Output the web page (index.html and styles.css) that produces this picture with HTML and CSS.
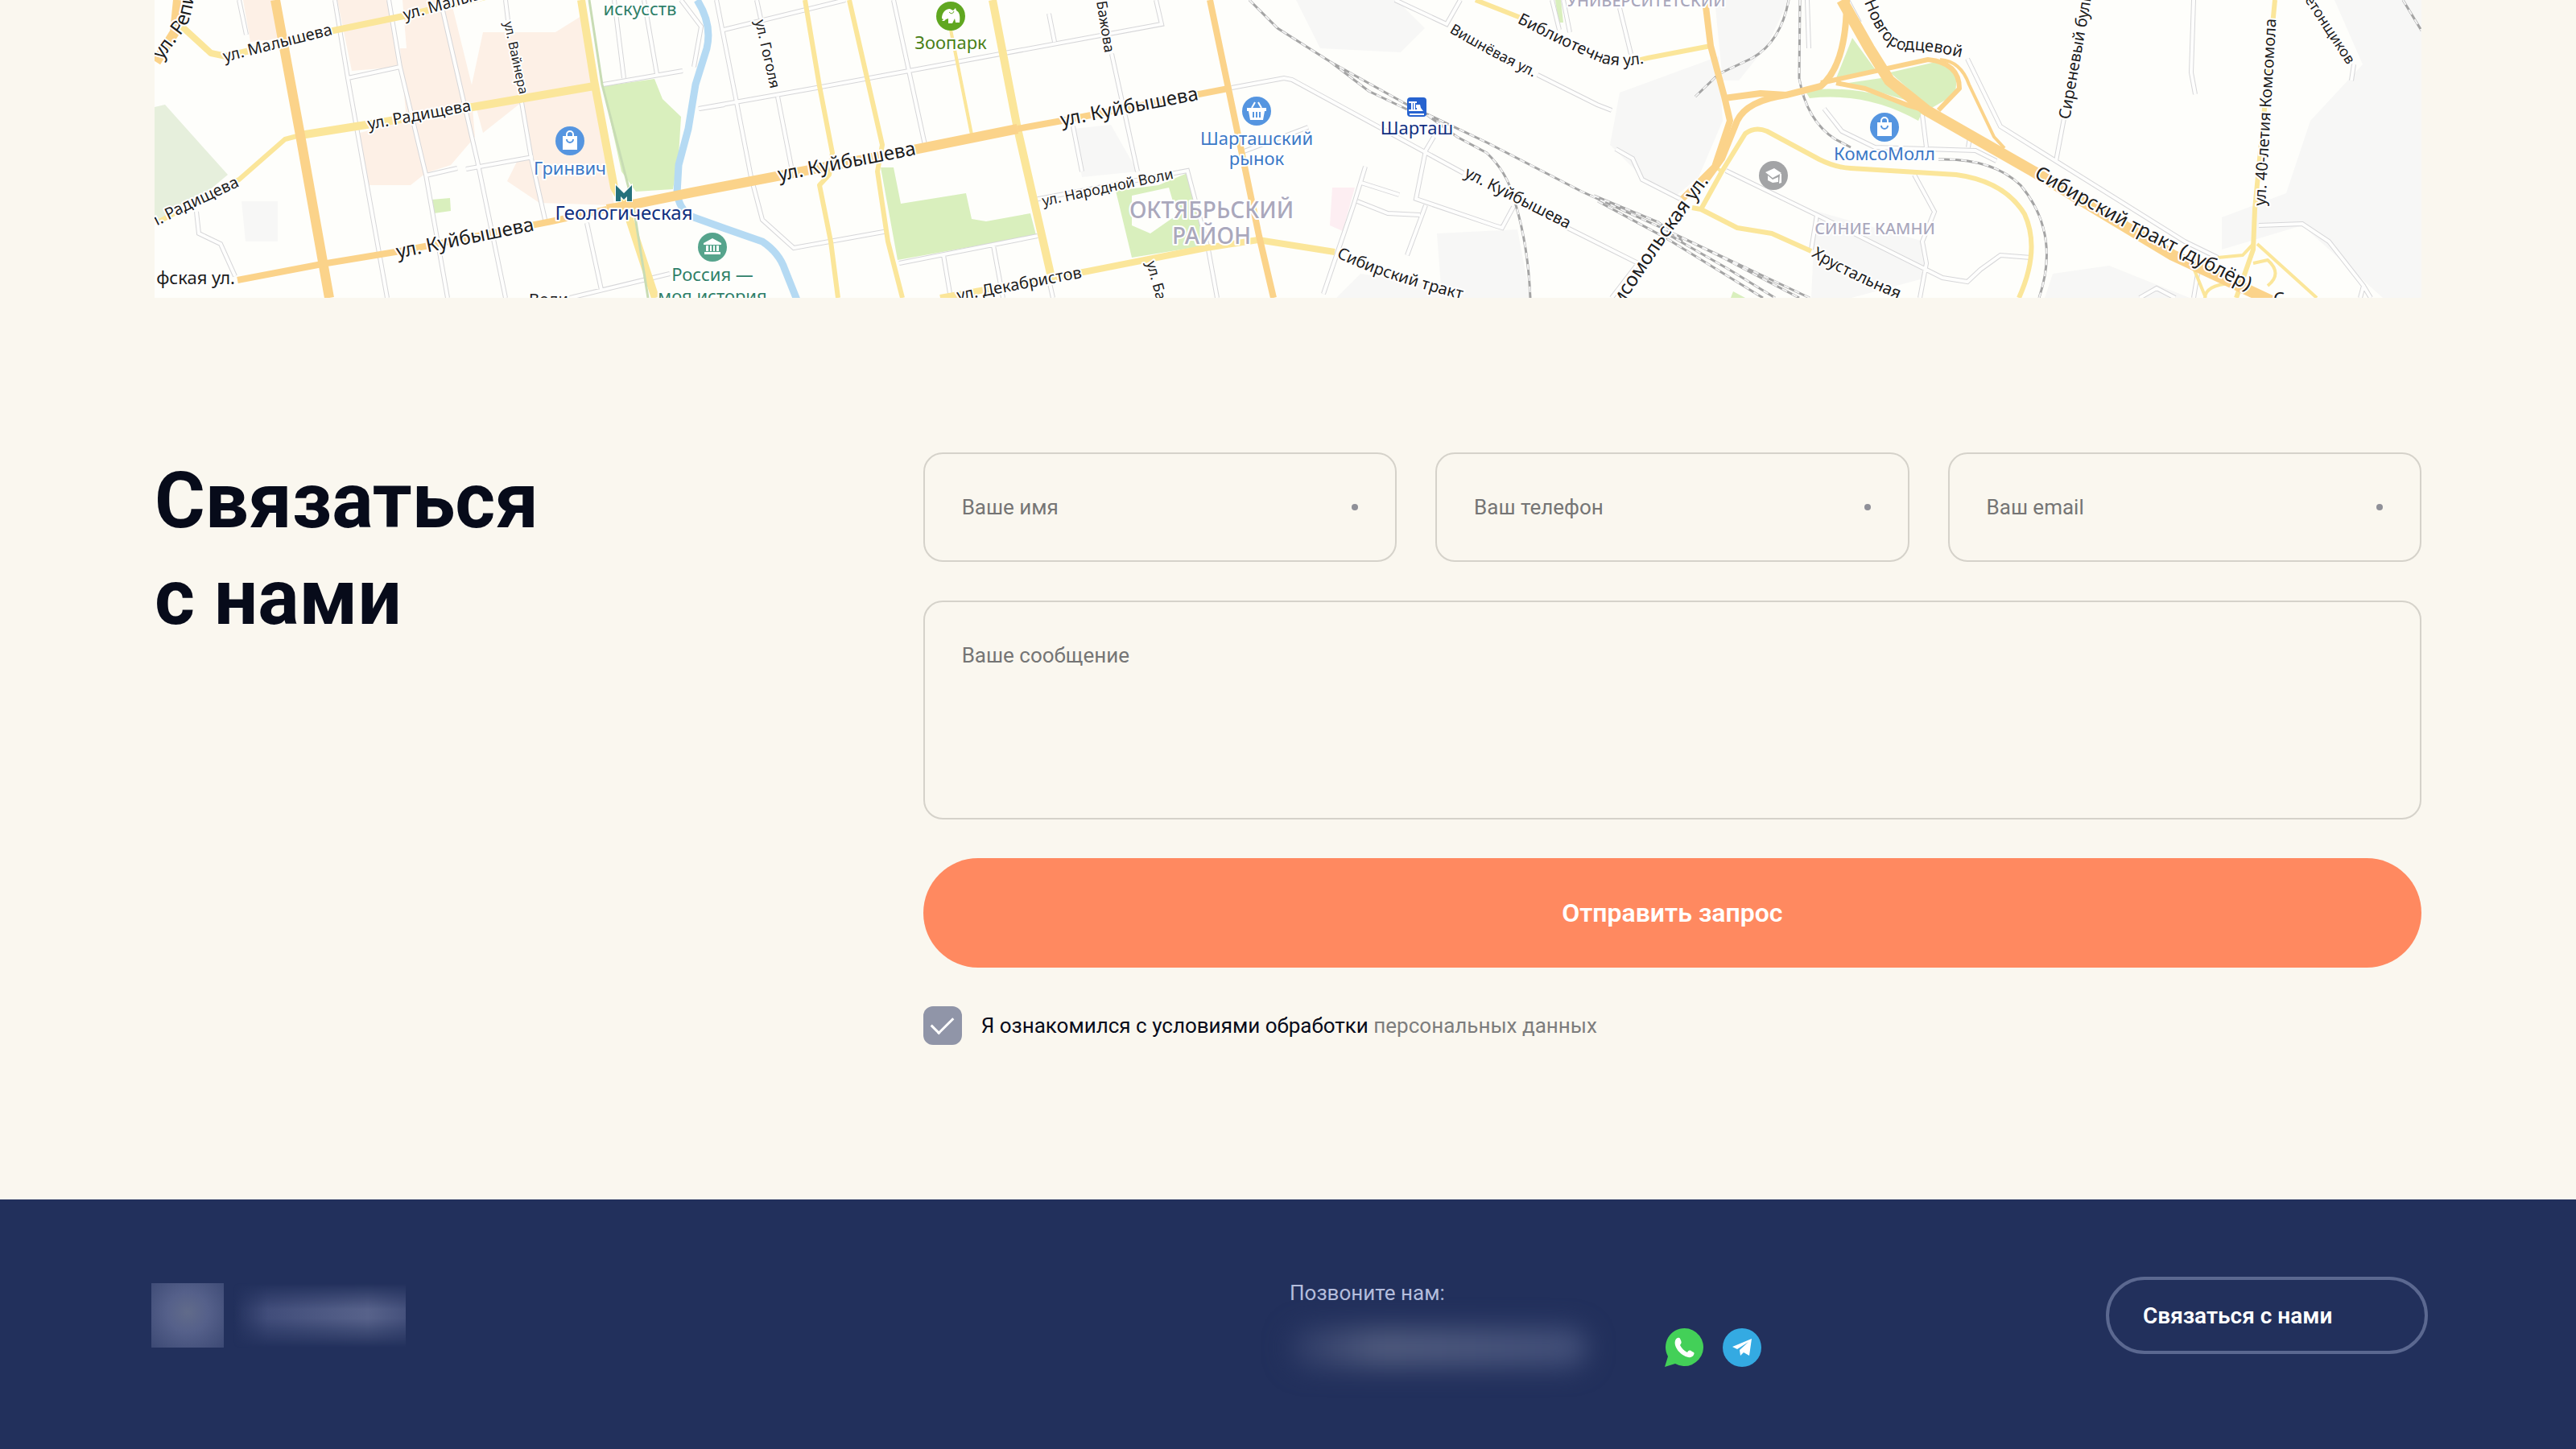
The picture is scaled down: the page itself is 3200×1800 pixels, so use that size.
FILE: index.html
```html
<!DOCTYPE html>
<html lang="ru">

<head>
    <meta charset="UTF-8">
    <meta name="viewport" content="width=device-width, initial-scale=1.0">
    <title>Связаться с нами</title>
    <link rel="stylesheet" href="styles.css">
</head>

<body>
    <main class="page">
        <!-- Map -->
        <svg class="map" viewBox="192 0 2816 370" preserveAspectRatio="xMidYMax slice" role="img" aria-label="Карта">
            <defs>
                <path id="t-repina" d="M201 75 L230 36 Q242 14 242 -30" />
                <path id="t-malysheva1" d="M279 77 L440 36" />
                <path id="t-malysheva2" d="M503 25 L660 -18" />
                <path id="t-vaynera" d="M626 28 L650 140" />
                <path id="t-radishcheva1" d="M458 161 L610 133" />
                <path id="t-radishcheva2" d="M160 298 L240 258 L298 231" />
                <path id="t-kuybysheva1" d="M494 321 L690 281" />
                <path id="t-kuybysheva2" d="M968 225 L1170 186" />
                <path id="t-kuybysheva3" d="M1319 157 L1520 118" />
                <path id="t-kuybysheva4" d="M1818 219 L1970 296" />
                <path id="t-gogolya" d="M938 26 L966 150" />
                <path id="t-bazhova1" d="M1362 2 L1378 100" />
                <path id="t-bazhova2" d="M1424 326 L1444 400" />
                <path id="t-narodnoy" d="M1296 256 L1490 215" />
                <path id="t-dekabristov" d="M1190 374 L1370 340" />
                <path id="t-vishnevaya" d="M1800 40 Q1860 75 1930 108" />
                <path id="t-bibliotechnaya" d="M1884 28 Q1950 62 1990 78 Q2025 88 2080 68" />
                <path id="t-sibirsky1" d="M1660 319 Q1710 346 1840 378" />
                <path id="t-komsomolskaya" d="M1974 440 L2073 293 L2123 225" />
                <path id="t-khrustalnaya" d="M2250 318 Q2300 350 2400 388" />
                <path id="t-sibirsky2" d="M2526 220 L2643 285 L2860 396" />
                <path id="t-sirenevy" d="M2571 149 L2608 -60" />
                <path id="t-40letiya" d="M2814 256 L2830 -20" />
                <path id="t-betonshchikov" d="M2850 -20 L2916 81" />
                <path id="t-novgorodtsevoy" d="M2303 -26 L2324 22 Q2340 58 2362 62 Q2400 60 2460 78" />
                <g id="i-bag">
                    <circle r="18" />
                    <path d="M-9 -6h18v17h-18z" fill="#fff" />
                    <path d="M-4 -6v-2a4 4 0 0 1 8 0v2" fill="none" stroke="#fff" stroke-width="2" />
                    <path d="M-4 -2a4 4 0 0 0 8 0" fill="none" stroke="#5595e0" stroke-width="2" />
                </g>
            </defs>
            <rect class="land" x="192" y="0" width="2816" height="370" />

            <!-- Districts -->
            <g class="peach">
                <path d="M302 0H341L352 48L311 52Z" />
                <path d="M419 0H483L497 83L437 88Z" />
                <path d="M497 60L560 60L585 110L590 170L560 205L529 215L510 230L455 230L447 165L505 150Z" />
                <path d="M500 0H560L592 130L570 120L540 60L505 60Z" />
                <path d="M600 40L690 40L722 20L738 105L763 255L670 252L630 225L645 195L662 197L648 127L600 165L585 110Z" />
            </g>
            <g class="grey">
                <path d="M300 250H345V300H305Z" />
                <path d="M1333 160L1380 155L1413 213L1344 220Z" />
                <path d="M1610 0H1735L1770 35L1740 65L1640 60Z" />
                <path d="M2012 115L2135 70L2140 150L2110 220L2080 245L2040 220L2000 180Z" />
                <path d="M2130 0H2222L2196 55L2160 100L2140 100Z" />
                <path d="M1785 290L1885 285L1901 370H1660L1690 340L1790 355Z" />
                <path d="M2255 262L2390 300L2393 345L2300 370H2250Z" />
                <path d="M2550 340L2620 330L2720 370H2540Z" />
                <path d="M3008 0H2900L2935 80L2870 150L2840 240L2760 270V310L2860 280L2960 370H3008Z" />
            </g>
            <path class="pink" d="M1655 233H1683L1668 287L1652 280Z" />
            <g class="park">
                <path class="park-pale" d="M192 133L205 130L283 217L240 253L192 275Z" />
                <path d="M749 107L813 98L823 123L846 145L843 193L836 235L790 238L772 213Z" />
                <path d="M536 248L559 246L560 262L539 265Z" />
                <path d="M1094 208H1110L1119 253L1200 240L1207 272L1225 275L1280 265L1287 292L1115 323Z" />
                <path fill-rule="evenodd" d="M1386 237L1439 230L1475 215L1498 305L1406 320ZM1406 243L1452 233L1462 267L1429 290L1406 280Z" />
                <path d="M2301 47L2330 87L2281 97ZM2296 103L2337 97L2370 125Z" />
                <path d="M2348 90L2413 75L2431 93L2429 117L2398 135Z" />
                <path d="M2242 112Q2320 104 2388 138L2383 150Q2320 114 2248 122Z" />
                <path d="M1932 0H1939L1942 28H1936Z" />
                <path d="M2150 370L2153 362L2168 370Z" />
            </g>
            <path class="river" d="M866 0Q885 30 878 60L864 105L855 160L843 205L841 240Q845 264 862 270L901 284L947 300Q968 314 975 335L991 375" />

            <!-- Small streets: grey casing with white on top -->
            <g class="street-case">
                <path id="streets" d="M297 0L306 43M416 0L432 97L481 370M483 0L497 83L529 217L556 370M547 0L593 200L628 370M628 0L631 25M648 127L660 197L678 277M432 97L497 83M529 218L568 209M579 210L662 195M729 277L747 360M749 105L848 88M763 0L775 97M800 0L816 92M846 0L871 33L862 83M244 263L247 290L274 303L292 343M708 370L832 340M869 135L900 130
                    M890 0L915 127L933 220L947 273L986 308L1103 287M940 0L945 23M966 120L983 207M899 37L1050 0M868 135L1009 110L1129 88L1443 30L1436 0M1110 0L1149 180M1303 17L1310 52M1381 67L1413 213M1333 157L1344 213M1285 248L1475 212L1501 310L1512 370M1117 327L1289 293M1172 317L1181 370M1234 305L1246 370M1302 343L1308 370
                    M1530 109L1595 97L1605 99L1818 215M1941 280L2035 327L2002 370M1733 0L1797 30L1814 0M1910 93L1984 130L2002 137M1781 170L1771 187L1759 247L1856 280L1866 283L1880 257M1771 255L1748 317M1696 207L1682 253L1644 365M1691 227L1738 242M1686 250L1724 265L1764 267M1540 190L1625 158M2007 185L2028 197L2040 223L2087 247M2012 10L2026 67M1928 0L1937 37M1942 0L1950 40M2144 212L2257 267L2413 345L2444 350L2460 335L2485 317L2523 320M2257 267L2250 310M2245 0L2247 60
                    M2295 0L2310 28M2444 73L2485 157L2714 300L2755 320M2266 135L2288 163L2329 183L2454 187L2480 200M2388 143L2393 183M2448 165L2445 183M2564 147L2554 200M2725 0L2722 90L2727 117M2924 80L2921 100M2806 280L2860 278L2893 300L2936 355L2932 370M2936 355L2945 370M2378 217L2403 263L2388 300L2393 327L2385 370M2658 370L2679 358L2702 370M2730 340L2725 370" />
            </g>
            <use class="street-fill" href="#streets" />

            <!-- Railways -->
            <g class="rail">
                <path id="rails" d="M1552 0L1587 35L1653 77L1748 130L1847 177L1965 238L2064 283L2248 370M1653 77L1700 113L1748 136M1773 143L1810 170L1847 190Q1872 214 1880 245Q1898 300 1901 370M2222 0Q2212 52 2177 72L2135 92L2106 120M2236 0L2235 97Q2244 150 2280 173L2299 183M2408 198Q2475 196 2510 230Q2560 290 2533 370M2985 0L3008 38
                    M1980 243L2060 276L2090 300M1985 250L2070 296L2190 370M2064 283L2140 320L2235 370M2070 290L2150 336L2205 370" />
            </g>
            <use class="rail-dash" href="#rails" />

            <!-- Main roads -->
            <g class="road yellow">
                <path class="w8" d="M226 33L262 66L281 70L414 38L501 20L620 -8" />
                <path class="w6" d="M194 277L297 223L354 173L373 168" />
                <path class="w10" d="M373 168L455 155L593 132L738 107" />
                <path class="w10" d="M722 0L738 100L763 233L777 257L814 370" />
                <path class="w6" d="M1000 0L1018 107L1034 190L1030 217L1018 230L1032 300L1041 370" />
                <path class="w6" d="M1055 0L1096 180L1090 213L1103 300L1121 370" />
                <path class="w4" d="M1181 37L1207 167" />
                <path class="w10" d="M1233 0L1264 160L1305 340" />
                <path class="w8" d="M1168 370L1351 337L1498 308L1563 298L1658 313" />
                <path class="w6" d="M1833 0L1889 22M2021 78L2047 72L2125 57" />
                <path class="w6" d="M2113 260L2139 213L2168 166Q2180 157 2195 163L2260 198Q2280 208 2299 209L2430 217Q2490 225 2515 266Q2535 310 2508 370" />
                <path class="w6" d="M2102 258L2113 260L2158 283L2201 290L2250 312" />
                <path class="w6" d="M2826 0L2801 260L2799 310L2778 370" />
                <path class="w4" d="M2755 320L2786 317L2799 303M2804 303L2878 370M2799 327L2817 323Q2836 340 2817 355M2771 352Q2740 354 2739 370M2725 333L2740 370M2130 207L2139 213" />
            </g>
            <path class="park-line" d="M732 0L748 105L787 257L805 370" />
            <g class="road orange">
                <path class="w12" d="M221 0L217 40L194 77" />
                <path class="w12" d="M342 0L373 168L409 370" />
                <path class="w8" d="M295 348L400 328L497 312L685 275L754 260" />
                <path class="w12" d="M754 260L791 253L860 239L970 218L1140 185L1264 160" />
                <path class="w8" d="M1264 160L1319 150L1526 110" />
                <path class="w8" d="M1503 0L1526 110L1564 293L1582 370" />
                <path class="w8" d="M2118 0L2125 57L2142 120L2149 150L2130 207L2090 247" />
                <path class="w8" d="M2142 122L2187 116L2219 118L2262 107Q2294 80 2294 0" />
                <path class="w8" d="M2219 118Q2170 125 2158 150L2139 197L2118 226" />
                <path class="w6" d="M2262 103L2395 74Q2434 78 2434 110L2408 137M2281 103L2317 110L2368 130L2395 138" />
                <path class="w4" d="M2410 74Q2436 76 2446 105L2477 170L2490 184" />
                <path class="w14" d="M2288 0L2322 60L2347 100L2393 137L2526 213L2699 317L2822 374" />
            </g>

            <!-- Street names -->
            <g class="label street">
                <text class="s24"><textPath href="#t-repina">ул. Репина</textPath></text>
                <text class="s20"><textPath href="#t-malysheva1">ул. Малышева</textPath></text>
                <text class="s20"><textPath href="#t-malysheva2">ул. Малышева</textPath></text>
                <text class="s16"><textPath href="#t-vaynera">ул. Вайнера</textPath></text>
                <text class="s20"><textPath href="#t-radishcheva1">ул. Радищева</textPath></text>
                <text class="s20" text-anchor="end"><textPath href="#t-radishcheva2" startOffset="100%">ул. Радищева</textPath></text>
                <text class="s24"><textPath href="#t-kuybysheva1">ул. Куйбышева</textPath></text>
                <text class="s24"><textPath href="#t-kuybysheva2">ул. Куйбышева</textPath></text>
                <text class="s24"><textPath href="#t-kuybysheva3">ул. Куйбышева</textPath></text>
                <text class="s20"><textPath href="#t-kuybysheva4">ул. Куйбышева</textPath></text>
                <text class="s22" x="292" y="353" text-anchor="end">фская ул.</text>
                <text class="s20" x="706" y="379" text-anchor="end">Воли</text>
                <text class="s18"><textPath href="#t-gogolya">ул. Гоголя</textPath></text>
                <text class="s18"><textPath href="#t-bazhova1">Бажова</textPath></text>
                <text class="s18"><textPath href="#t-bazhova2">ул. Баж</textPath></text>
                <text class="s18"><textPath href="#t-narodnoy">ул. Народной Воли</textPath></text>
                <text class="s20"><textPath href="#t-dekabristov">ул. Декабристов</textPath></text>
                <text class="s18"><textPath href="#t-vishnevaya">Вишнёвая ул.</textPath></text>
                <text class="s20"><textPath href="#t-bibliotechnaya">Библиотечная ул.</textPath></text>
                <text class="s20"><textPath href="#t-sibirsky1">Сибирский тракт</textPath></text>
                <text class="s24" text-anchor="end"><textPath href="#t-komsomolskaya" startOffset="100%">Комсомольская ул.</textPath></text>
                <text class="s20"><textPath href="#t-khrustalnaya">Хрустальная</textPath></text>
                <text class="s24"><textPath href="#t-sibirsky2">Сибирский тракт (дублёр)</textPath></text>
                <text class="s22" x="2824" y="379">С</text>
                <text class="s20"><textPath href="#t-sirenevy">Сиреневый бульвар</textPath></text>
                <text class="s20"><textPath href="#t-40letiya">ул. 40-летия Комсомола</textPath></text>
                <text class="s18" text-anchor="end"><textPath href="#t-betonshchikov" startOffset="100%">бетонщиков</textPath></text>
                <text class="s20"><textPath href="#t-novgorodtsevoy">ул. Новгородцевой</textPath></text>
            </g>

            <!-- Places -->
            <g class="label place" text-anchor="middle">
                <text class="s22 museum" x="795" y="19">искусств</text>
                <text class="s22 museum" x="885" y="349">Россия —</text>
                <text class="s22 museum" x="885" y="376">моя история</text>
                <text class="s22 zoo" x="1181" y="61">Зоопарк</text>
                <text class="s22 shop" x="708" y="217">Гринвич</text>
                <text class="s22 shop" x="1561" y="180">Шарташский</text>
                <text class="s22 shop" x="1561" y="205">рынок</text>
                <text class="s22 shop" x="2341" y="199">КомсоМолл</text>
                <text class="s24 station" x="775" y="273">Геологическая</text>
                <text class="s22 station" x="1760" y="167">Шарташ</text>
                <text class="s28 district" x="1505" y="271">ОКТЯБРЬСКИЙ</text>
                <text class="s28 district" x="1505" y="303">РАЙОН</text>
                <text class="s20 district" x="2045" y="8">УНИВЕРСИТЕТСКИЙ</text>
                <text class="s20 district" x="2329" y="291">СИНИЕ КАМНИ</text>
            </g>
            <use href="#i-bag" x="708" y="175" fill="#5595e0" />
            <use href="#i-bag" x="2341" y="158" fill="#5595e0" />
            <g transform="translate(1561 138)">
                <circle r="18" fill="#5595e0" />
                <path d="M-12 -4H12V0H10L8 11H-8L-10 0H-12Z" fill="#fff" />
                <path d="M-6 -4L-2 -11M6 -4L2 -11" stroke="#fff" stroke-width="2" />
                <path d="M-4 1V8M0 1V8M4 1V8" stroke="#5595e0" stroke-width="2" />
            </g>
            <g transform="translate(885 307)">
                <circle r="18" fill="#56a48c" />
                <path d="M-11 -5L0 -11L11 -5V-3H-11ZM-10 6H10V9H-10ZM-8 -2H-5V5H-8ZM-3 -2H-1V5H-3ZM1 -2H3V5H1ZM5 -2H8V5H5Z" fill="#fff" />
            </g>
            <g transform="translate(1181 20)">
                <circle r="18" fill="#60a720" />
                <path d="M-11 3C-11 -4 -7 -9 -1 -9L3 -7L6 -10L7 -7C11 -5 12 0 11 8H6L5 3L2 9H-3V3L-6 4L-8 6L-11 6L-9 4Z" fill="#fff" />
                <path d="M-2 -5Q2 -1 4 -6" fill="none" stroke="#60a720" stroke-width="1" />
            </g>
            <g transform="translate(2203 218)">
                <circle r="18" fill="#a3a4a6" />
                <path d="M-10 -4L1 -9L10 -3L-1 3ZM-7 0L-1 5L6 2V8L-1 9L-7 6ZM8 -2H10V9L7 10Z" fill="#fff" />
            </g>
            <g transform="translate(1760 133)">
                <rect x="-12" y="-12" width="24" height="24" rx="4" fill="#2763cf" />
                <path d="M-10 -7H0V-5H-2V3H0V5H-10V3H-7V-5H-10ZM-5 -5V3H-4V-5ZM-1 -3H4L5 1L8 5H0V1H-1ZM-9 8H9V10H-9Z" fill="#fff" />
            </g>
            <path d="M765 230L775 240L785 230V250H779V244L775 248L771 244V250H765Z" fill="#25717c" stroke="#fff" stroke-width="2" paint-order="stroke" />
        </svg>

        <!-- Contact form -->
        <section class="contact" id="contact">
            <h2 class="contact-title">Связаться<br>с нами</h2>
            <form class="contact-form">
                <div class="field-row">
                    <div class="field">
                        <input type="text" class="input" name="name" placeholder="Ваше имя" aria-label="Ваше имя" required>
                    </div>
                    <div class="field">
                        <input type="tel" class="input" name="phone" placeholder="Ваш телефон" aria-label="Ваш телефон" required>
                    </div>
                    <div class="field">
                        <input type="email" class="input" name="email" placeholder="Ваш email" aria-label="Ваш email" required>
                    </div>
                </div>
                <textarea class="input textarea" name="message" placeholder="Ваше сообщение" aria-label="Ваше сообщение"></textarea>
                <button type="submit" class="submit-button">Отправить запрос</button>
                <div class="agree">
                    <input type="checkbox" class="checkbox" id="agree" checked>
                    <label for="agree">Я ознакомился с условиями обработки <a href="#">персональных данных</a></label>
                </div>
            </form>
        </section>
    </main>

    <footer class="footer">
        <div class="logo">
            <span class="logo-mark"></span>
            <span class="logo-name"></span>
        </div>
        <div class="footer-right">
            <div class="phone">
                <span class="phone-label">Позвоните нам:</span>
                <div class="phone-row">
                    <span class="phone-number"></span>
                    <div class="socials">
                        <a href="#" aria-label="WhatsApp">
                            <svg class="social-icon" viewBox="0 0 48 48">
                                <path d="M24.500 0A23.500 23.500 0 1 1 13 44L0 48L4 35A23.500 23.500 0 0 1 24.500 0Z" fill="#43d058" />
                                <path d="M16 12C18 11 19 12 20 15C21 18 21 18 19 21C21 25 24 28 28 30C30 27 31 27 34 29C37 30 37 31 36 33C34 37 29 37 24 34C18 31 14 25 13 21C12 17 13 13 16 12Z" fill="#fff" />
                            </svg>
                        </a>
                        <a href="#" aria-label="Telegram">
                            <svg class="social-icon" viewBox="0 0 48 48">
                                <circle cx="24" cy="24" r="24" fill="#34aae2" />
                                <path d="M12 23L36 13L33 34L26 30L22 34L21 27L32 17L18 26Z" fill="#fff" />
                            </svg>
                        </a>
                    </div>
                </div>
            </div>
            <button type="button" class="footer-button">Связаться с нами</button>
        </div>
    </footer>
</body>

</html>
```
FILE: styles.css
```css
/* Base Styles */
* {
    box-sizing: border-box;
}

body {
    font-family: Roboto, "Liberation Sans", sans-serif;
    font-size: 26px;
    line-height: 40px;
    background-color: #faf7ef;
    margin: 0;
    color: #070b1a;
}

.page {
    padding: 0 6%;
}

/* Map */
.map {
    display: block;
    width: 100%;
    height: 370px;
}

.land {
    fill: #fefefb;
}

.peach {
    fill: #fdf0e6;
}

.grey {
    fill: #f7f7f6;
}

.pink {
    fill: #fdeef2;
}

.park {
    fill: #d9efbd;
}

.park-pale {
    fill: #e6efdc;
}

.park-line {
    fill: none;
    stroke: #c8dcb4;
    stroke-width: 3;
}

.river {
    fill: none;
    stroke: #b5daf3;
    stroke-width: 9;
}

.street-case {
    fill: none;
    stroke: #d6d6d8;
    stroke-width: 6;
}

.street-fill {
    fill: none;
    stroke: #fefefd;
    stroke-width: 4;
}

.rail {
    fill: none;
    stroke: #a4a4a4;
    stroke-width: 3;
}

.rail-dash {
    fill: none;
    stroke: #f4f4f4;
    stroke-width: 2;
    stroke-dasharray: 7 7;
}

.road {
    fill: none;
    stroke-linejoin: round;
}

.yellow {
    stroke: #fbe69a;
}

.orange {
    stroke: #fbd38a;
}

.w4 {
    stroke-width: 4;
}

.w6 {
    stroke-width: 6;
}

.w8 {
    stroke-width: 8;
}

.w10 {
    stroke-width: 10;
}

.w12 {
    stroke-width: 12;
}

.w14 {
    stroke-width: 14;
}

.label {
    font-family: "Noto Sans", "Open Sans", sans-serif;
    stroke: #fff;
    stroke-width: 4;
    stroke-linejoin: round;
    paint-order: stroke;
}

.street {
    fill: #1c1c1c;
}

.s16 {
    font-size: 16px;
}

.s18 {
    font-size: 18px;
}

.s20 {
    font-size: 20px;
}

.s22 {
    font-size: 22px;
}

.s24 {
    font-size: 24px;
}

.s28 {
    font-size: 28px;
}

.museum {
    fill: #2f7f68;
}

.zoo {
    fill: #4a7f16;
}

.shop {
    fill: #3b78c6;
}

.station {
    fill: #12307f;
}

.district {
    fill: #aaa8bc;
    font-weight: 500;
}

/* Contact form */
.contact {
    display: grid;
    grid-template-columns: 1fr 2fr;
    gap: 24px;
    padding: 192px 0;
}

.contact-title {
    margin: 0;
    font-size: 96px;
    line-height: 120px;
    font-weight: 700;
}

.contact-form {
    display: flex;
    flex-direction: column;
    gap: 48px;
}

.field-row {
    display: grid;
    grid-template-columns: repeat(3, 1fr);
    gap: 48px;
}

.field {
    position: relative;
}

/* Required mark */
.field::after {
    content: "";
    position: absolute;
    top: 50%;
    right: 48px;
    width: 8px;
    height: 8px;
    margin-top: -4px;
    border-radius: 50%;
    background-color: #8f9098;
}

.input {
    display: block;
    width: 100%;
    height: 136px;
    padding: 0 46px;
    border: 2px solid #d5d2ca;
    border-radius: 24px;
    background: transparent;
    font: inherit;
    color: inherit;
}

.input::placeholder {
    color: #757575;
    opacity: 1;
}

.textarea {
    height: 272px;
    padding: 46px;
    resize: none;
}

.submit-button {
    height: 136px;
    border: none;
    border-radius: 68px;
    background-color: #ff8960;
    color: #fff;
    font-family: inherit;
    font-size: 32px;
    font-weight: 600;
    cursor: pointer;
}

.agree {
    display: flex;
    align-items: center;
    gap: 24px;
}

.agree a {
    color: #7d7d7d;
    text-decoration: none;
}

.checkbox {
    appearance: none;
    width: 48px;
    height: 48px;
    margin: 0;
    border-radius: 12px;
    background-color: #9095a8;
    display: grid;
    place-items: center;
}

.checkbox:checked::before {
    content: "";
    width: 24px;
    height: 12px;
    margin-bottom: 8px;
    border-left: 3px solid #fff;
    border-bottom: 3px solid #fff;
    transform: rotate(-45deg);
}

/* Footer */
.footer {
    display: grid;
    grid-template-columns: 1fr 1fr;
    min-height: 310px;
    padding: 96px 184px 96px 188px;
    background-color: #22305c;
    color: #fff;
}

.logo {
    display: flex;
    gap: 12px;
    padding-top: 8px;
}

.logo-mark {
    width: 90px;
    height: 80px;
    background: radial-gradient(ellipse at 50% 45%, #616b8a, #55608a 40%, #3c4974 100%);
}

.logo-name {
    width: 214px;
    height: 80px;
    background: linear-gradient(90deg, rgba(70, 82, 126, 0), #414d7a 20%, #57628a 78%, #45517c);
    -webkit-mask-image: linear-gradient(transparent, #000 40%, #000 55%, transparent);
    mask-image: linear-gradient(transparent, #000 40%, #000 55%, transparent);
}

.footer-right {
    display: flex;
    justify-content: space-between;
    align-items: flex-start;
}

.phone {
    display: flex;
    flex-direction: column;
    gap: 24px;
}

.phone-label {
    color: #b4bddc;
}

.phone-row {
    display: flex;
    align-items: center;
    gap: 96px;
}

.phone-number {
    width: 370px;
    height: 48px;
    border-radius: 24px;
    background: linear-gradient(90deg, #2c3965, #505b7e 30%, #4a567c 60%, #414e78);
    filter: blur(16px);
}

.socials {
    display: flex;
    gap: 24px;
}

.social-icon {
    display: block;
    width: 48px;
    height: 48px;
}

.footer-button {
    width: 400px;
    height: 96px;
    padding: 0 42px;
    border: 4px solid #5b6890;
    border-radius: 48px;
    background: transparent;
    color: #fff;
    font-family: inherit;
    font-size: 28px;
    font-weight: 600;
    text-align: left;
    cursor: pointer;
}
```
